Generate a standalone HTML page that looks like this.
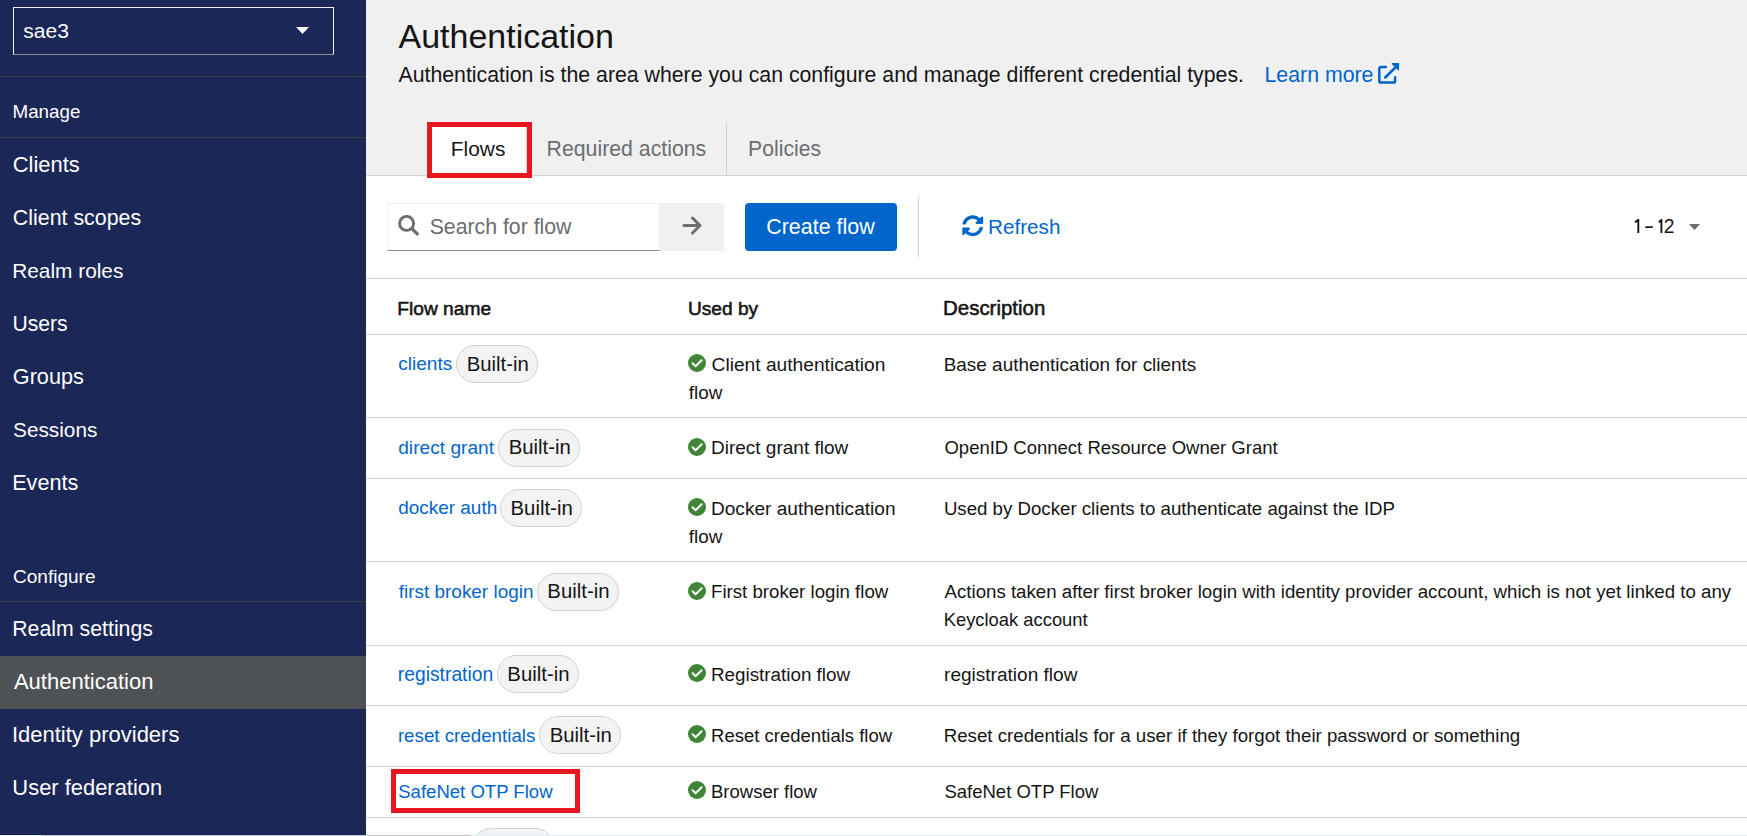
<!DOCTYPE html>
<html><head><meta charset="utf-8"><title>Authentication</title>
<style>
html,body{margin:0;padding:0;}
body{width:1747px;height:836px;overflow:hidden;position:relative;background:#fff;font-family:"Liberation Sans",sans-serif;color:#151515;}
.t{position:absolute;white-space:nowrap;}
.r{position:absolute;}
svg{position:absolute;display:block;}
.badge{position:absolute;height:38px;box-sizing:border-box;border:1px solid #d2d2d2;border-radius:19px;background:#f3f3f3;}
</style></head><body>

<div class="r" style="left:0px;top:0px;width:366px;height:836px;background:#1b2756;"></div>
<div class="r" style="left:13px;top:7px;width:319px;height:46px;border:1px solid #f0f0f0;border-bottom-color:#8a8d90;"></div>
<div class="t " style="left:23.27px;top:17px;font-size:21.048px;line-height:27px;color:#fff;">sae3</div>
<svg style="left:296px;top:27px" width="13" height="7" viewBox="0 0 13 7"><path d="M0 0H13L6.5 7Z" fill="#fff"/></svg>
<div class="r" style="left:0px;top:76px;width:366px;height:1px;background:#3c3f42;"></div>
<div class="t " style="left:12.50px;top:99px;font-size:18.797px;line-height:25px;color:#fff;">Manage</div>
<div class="r" style="left:0px;top:137px;width:366px;height:1px;background:#3c3f42;"></div>
<div class="t " style="left:12.80px;top:150px;font-size:21.919px;line-height:29px;color:#fff;">Clients</div>
<div class="t " style="left:12.83px;top:204px;font-size:21.385px;line-height:28px;color:#fff;">Client scopes</div>
<div class="t " style="left:12.23px;top:257px;font-size:20.843px;line-height:27px;color:#fff;">Realm roles</div>
<div class="t " style="left:12.42px;top:310px;font-size:21.155px;line-height:27px;color:#fff;">Users</div>
<div class="t " style="left:12.82px;top:362px;font-size:21.656px;line-height:29px;color:#fff;">Groups</div>
<div class="t " style="left:13.07px;top:416px;font-size:20.779px;line-height:27px;color:#fff;">Sessions</div>
<div class="t " style="left:12.17px;top:468px;font-size:21.667px;line-height:29px;color:#fff;">Events</div>
<div class="t " style="left:12.95px;top:564px;font-size:19.059px;line-height:25px;color:#fff;">Configure</div>
<div class="r" style="left:0px;top:601px;width:366px;height:1px;background:#3c3f42;"></div>
<div class="r" style="left:0px;top:656px;width:366px;height:53px;background:#4f5255;"></div>
<div class="t " style="left:12.20px;top:615px;font-size:21.292px;line-height:28px;color:#fff;">Realm settings</div>
<div class="t " style="left:13.90px;top:667px;font-size:22.038px;line-height:29px;color:#fff;">Authentication</div>
<div class="t " style="left:11.92px;top:720px;font-size:22.016px;line-height:29px;color:#fff;">Identity providers</div>
<div class="t " style="left:12.37px;top:773px;font-size:21.925px;line-height:29px;color:#fff;">User federation</div>
<div class="r" style="left:366px;top:0px;width:1381px;height:175px;background:#f0f0f0;"></div>
<div class="r" style="left:366px;top:175px;width:1381px;height:1px;background:#d2d2d2;"></div>
<div class="t " style="left:398.50px;top:15px;font-size:33.997px;line-height:42px;color:#151515;">Authentication</div>
<div class="t " style="left:398.50px;top:61px;font-size:21.297px;line-height:28px;color:#151515;">Authentication is the area where you can configure and manage different credential types.</div>
<div class="t " style="left:1264.49px;top:61px;font-size:21.323px;line-height:28px;color:#0066cc;">Learn more</div>
<svg style="left:1378px;top:63px;overflow:visible" width="22" height="22" viewBox="0 0 22 22"><path d="M7.9 4.1H3A1.7 1.7 0 0 0 1.3 5.8V17.9A1.7 1.7 0 0 0 3 19.6H15.4A1.7 1.7 0 0 0 17.1 17.9V14.2" fill="none" stroke="#0066cc" stroke-width="2.5" stroke-linecap="round"/><path d="M7.3 14.5L17.2 4.6" stroke="#0066cc" stroke-width="2.7" stroke-linecap="round"/><path d="M14.2 0.6H20.5V6.9Z" fill="#0066cc" stroke="#0066cc" stroke-width="1.2" stroke-linejoin="round"/></svg>
<div class="r" style="left:427px;top:122px;width:100px;height:54px;background:#fff;"></div>
<div class="r" style="left:526px;top:123px;width:1px;height:52px;background:#d2d2d2;"></div>
<div class="t " style="left:450.83px;top:135px;font-size:20.88px;line-height:27px;color:#151515;">Flows</div>
<div class="t " style="left:546.60px;top:135px;font-size:21.272px;line-height:28px;color:#6a6e73;">Required actions</div>
<div class="r" style="left:726px;top:123px;width:1px;height:52px;background:#d2d2d2;"></div>
<div class="t " style="left:748.11px;top:135px;font-size:21.171px;line-height:27px;color:#6a6e73;">Policies</div>
<div class="r" style="left:427px;top:122px;width:95px;height:46px;border:5px solid #e8161e;"></div>
<div class="r" style="left:387px;top:203px;width:271px;height:46px;background:#fff;border:1px solid #f0f0f0;border-bottom:1px solid #8a8d90;"></div>
<svg style="left:398px;top:215px" width="22" height="22" viewBox="0 0 22 22"><circle cx="8.6" cy="8.4" r="7.0" fill="none" stroke="#6a6e73" stroke-width="2.9"/><path d="M14 13.8L19.3 18.9" stroke="#6a6e73" stroke-width="3.3" stroke-linecap="round"/></svg>
<div class="t " style="left:429.65px;top:213px;font-size:21.282px;line-height:28px;color:#6a6e73;">Search for flow</div>
<div class="r" style="left:660px;top:203px;width:64px;height:48px;background:#f0f0f0;"></div>
<svg style="left:682px;top:216px" width="21" height="19" viewBox="0 0 21 19"><path d="M2 9.5H18M10.5 2L18 9.5L10.5 17" fill="none" stroke="#6a6e73" stroke-width="3" stroke-linecap="round" stroke-linejoin="round"/></svg>
<div class="r" style="left:745px;top:203px;width:152px;height:48px;background:#0066cc;border-radius:4px;"></div>
<div class="t " style="left:766.23px;top:213px;font-size:21.457px;line-height:28px;color:#fff;">Create flow</div>
<div class="r" style="left:918px;top:197px;width:1px;height:60px;background:#d2d2d2;"></div>
<svg style="left:962px;top:215px" width="21.5" height="21.5" viewBox="0 0 512 512"><path fill="#0066cc" d="M370.72 133.28C339.458 104.008 298.888 87.962 255.848 88c-77.458.068-144.328 53.178-162.791 126.85-1.344 5.363-6.122 9.15-11.651 9.15H24.103c-7.498 0-13.194-6.807-11.807-14.176C33.933 94.924 134.813 8 256 8c66.448 0 126.791 26.136 171.315 68.685L463.03 40.97C478.149 25.851 504 36.559 504 57.941V192c0 13.255-10.745 24-24 24H345.941c-21.382 0-32.09-25.851-16.971-40.971l41.75-41.749zM32 296h134.059c21.382 0 32.09 25.851 16.971 40.971l-41.75 41.75c31.262 29.273 71.835 45.319 114.876 45.28 77.418-.07 144.315-53.144 162.787-126.849 1.344-5.363 6.122-9.15 11.651-9.15h57.304c7.498 0 13.194 6.807 11.807 14.176C478.067 417.076 377.187 504 256 504c-66.448 0-126.791-26.136-171.315-68.685L48.97 471.03C33.851 486.149 8 475.441 8 454.059V320c0-13.255 10.745-24 24-24z"/></svg>
<div class="t " style="left:988.05px;top:213px;font-size:20.685px;line-height:27px;color:#0066cc;">Refresh</div>
<svg style="left:1630px;top:215px" width="40" height="22" viewBox="0 0 40 22"><path d="M5.0 7.2L8.3 4.9V17.9M28.8 7.2L31.4 4.9V17.9" fill="none" stroke="#151515" stroke-width="1.9" stroke-linejoin="round"/><path d="M15.3 12.1H22.8" stroke="#151515" stroke-width="1.7"/></svg>
<div class="t " style="left:1663.74px;top:214px;font-size:19.3px;line-height:25px;color:#151515;">2</div>
<svg style="left:1689px;top:224px" width="11" height="6" viewBox="0 0 11 6"><path d="M0 0H11L5.5 6Z" fill="#6a6e73"/></svg>
<div class="r" style="left:366px;top:278px;width:1381px;height:1px;background:#d2d2d2;"></div>
<div class="t " style="left:397.26px;top:296px;font-size:19.203px;line-height:25px;color:#151515;-webkit-text-stroke:0.55px #151515;">Flow name</div>
<div class="t " style="left:687.96px;top:296px;font-size:19.139px;line-height:25px;color:#151515;-webkit-text-stroke:0.55px #151515;">Used by</div>
<div class="t " style="left:943.06px;top:294px;font-size:20.453px;line-height:27px;color:#151515;-webkit-text-stroke:0.55px #151515;">Description</div>
<div class="r" style="left:366px;top:334px;width:1381px;height:1px;background:#d2d2d2;"></div>
<div class="r" style="left:366px;top:417px;width:1381px;height:1px;background:#d2d2d2;"></div>
<div class="r" style="left:366px;top:478px;width:1381px;height:1px;background:#d2d2d2;"></div>
<div class="r" style="left:366px;top:561px;width:1381px;height:1px;background:#d2d2d2;"></div>
<div class="r" style="left:366px;top:645px;width:1381px;height:1px;background:#d2d2d2;"></div>
<div class="r" style="left:366px;top:705px;width:1381px;height:1px;background:#d2d2d2;"></div>
<div class="r" style="left:366px;top:766px;width:1381px;height:1px;background:#d2d2d2;"></div>
<div class="r" style="left:366px;top:817px;width:1381px;height:1px;background:#d2d2d2;"></div>
<div class="t " style="left:398.24px;top:351px;font-size:19.058px;line-height:25px;color:#0066cc;">clients</div>
<div class="badge" style="left:456.30px;top:345.40px;width:82px;"></div>
<div class="t " style="left:466.67px;top:351px;font-size:20.344px;line-height:26px;color:#151515;">Built-in</div>
<svg style="left:688.3px;top:354.40px" width="18" height="18" viewBox="0 0 18 18"><circle cx="9" cy="9" r="9" fill="#3e8635"/><path d="M4.6 9.3L7.6 12.2L13.6 6.3" fill="none" stroke="#fff" stroke-width="2.0" stroke-linecap="round" stroke-linejoin="round"/></svg>
<div class="t " style="left:711.54px;top:352px;font-size:19.196px;line-height:25px;color:#151515;">Client authentication</div>
<div class="t " style="left:688.81px;top:380px;font-size:18.87px;line-height:25px;color:#151515;">flow</div>
<div class="t " style="left:943.68px;top:352px;font-size:18.942px;line-height:25px;color:#151515;">Base authentication for clients</div>
<div class="t " style="left:398.23px;top:435px;font-size:19.173px;line-height:25px;color:#0066cc;">direct grant</div>
<div class="badge" style="left:498.30px;top:429.00px;width:82px;"></div>
<div class="t " style="left:508.67px;top:434px;font-size:20.344px;line-height:26px;color:#151515;">Built-in</div>
<svg style="left:688.3px;top:438.00px" width="18" height="18" viewBox="0 0 18 18"><circle cx="9" cy="9" r="9" fill="#3e8635"/><path d="M4.6 9.3L7.6 12.2L13.6 6.3" fill="none" stroke="#fff" stroke-width="2.0" stroke-linecap="round" stroke-linejoin="round"/></svg>
<div class="t " style="left:710.98px;top:435px;font-size:19.007px;line-height:25px;color:#151515;">Direct grant flow</div>
<div class="t " style="left:944.46px;top:435px;font-size:18.519px;line-height:25px;color:#151515;">OpenID Connect Resource Owner Grant</div>
<div class="t " style="left:398.24px;top:495px;font-size:18.945px;line-height:25px;color:#0066cc;">docker auth</div>
<div class="badge" style="left:500.20px;top:489.40px;width:82px;"></div>
<div class="t " style="left:510.57px;top:495px;font-size:20.344px;line-height:26px;color:#151515;">Built-in</div>
<svg style="left:688.3px;top:498.40px" width="18" height="18" viewBox="0 0 18 18"><circle cx="9" cy="9" r="9" fill="#3e8635"/><path d="M4.6 9.3L7.6 12.2L13.6 6.3" fill="none" stroke="#fff" stroke-width="2.0" stroke-linecap="round" stroke-linejoin="round"/></svg>
<div class="t " style="left:710.97px;top:496px;font-size:19.087px;line-height:25px;color:#151515;">Docker authentication</div>
<div class="t " style="left:688.81px;top:524px;font-size:18.87px;line-height:25px;color:#151515;">flow</div>
<div class="t " style="left:943.89px;top:496px;font-size:18.674px;line-height:25px;color:#151515;">Used by Docker clients to authenticate against the IDP</div>
<div class="t " style="left:398.81px;top:579px;font-size:18.935px;line-height:25px;color:#0066cc;">first broker login</div>
<div class="badge" style="left:537.00px;top:572.60px;width:82px;"></div>
<div class="t " style="left:547.37px;top:578px;font-size:20.344px;line-height:26px;color:#151515;">Built-in</div>
<svg style="left:688.3px;top:581.60px" width="18" height="18" viewBox="0 0 18 18"><circle cx="9" cy="9" r="9" fill="#3e8635"/><path d="M4.6 9.3L7.6 12.2L13.6 6.3" fill="none" stroke="#fff" stroke-width="2.0" stroke-linecap="round" stroke-linejoin="round"/></svg>
<div class="t " style="left:711.01px;top:579px;font-size:18.674px;line-height:25px;color:#151515;">First broker login flow</div>
<div class="t " style="left:944.50px;top:579px;font-size:18.68px;line-height:25px;color:#151515;">Actions taken after first broker login with identity provider account, which is not yet linked to any</div>
<div class="t " style="left:943.73px;top:607px;font-size:18.374px;line-height:25px;color:#151515;">Keycloak account</div>
<div class="t " style="left:397.84px;top:662px;font-size:19.295px;line-height:25px;color:#0066cc;">registration</div>
<div class="badge" style="left:497.00px;top:655.40px;width:82px;"></div>
<div class="t " style="left:507.37px;top:661px;font-size:20.344px;line-height:26px;color:#151515;">Built-in</div>
<svg style="left:688.3px;top:664.40px" width="18" height="18" viewBox="0 0 18 18"><circle cx="9" cy="9" r="9" fill="#3e8635"/><path d="M4.6 9.3L7.6 12.2L13.6 6.3" fill="none" stroke="#fff" stroke-width="2.0" stroke-linecap="round" stroke-linejoin="round"/></svg>
<div class="t " style="left:710.99px;top:662px;font-size:18.825px;line-height:25px;color:#151515;">Registration flow</div>
<div class="t " style="left:944.06px;top:662px;font-size:19.05px;line-height:25px;color:#151515;">registration flow</div>
<div class="t " style="left:397.88px;top:723px;font-size:18.743px;line-height:25px;color:#0066cc;">reset credentials</div>
<div class="badge" style="left:539.30px;top:716.40px;width:82px;"></div>
<div class="t " style="left:549.67px;top:722px;font-size:20.344px;line-height:26px;color:#151515;">Built-in</div>
<svg style="left:688.3px;top:725.40px" width="18" height="18" viewBox="0 0 18 18"><circle cx="9" cy="9" r="9" fill="#3e8635"/><path d="M4.6 9.3L7.6 12.2L13.6 6.3" fill="none" stroke="#fff" stroke-width="2.0" stroke-linecap="round" stroke-linejoin="round"/></svg>
<div class="t " style="left:711.02px;top:723px;font-size:18.527px;line-height:25px;color:#151515;">Reset credentials flow</div>
<div class="t " style="left:943.70px;top:723px;font-size:18.701px;line-height:25px;color:#151515;">Reset credentials for a user if they forgot their password or something</div>
<div class="t " style="left:398.26px;top:779px;font-size:18.563px;line-height:25px;color:#0066cc;">SafeNet OTP Flow</div>
<svg style="left:688.3px;top:781.00px" width="18" height="18" viewBox="0 0 18 18"><circle cx="9" cy="9" r="9" fill="#3e8635"/><path d="M4.6 9.3L7.6 12.2L13.6 6.3" fill="none" stroke="#fff" stroke-width="2.0" stroke-linecap="round" stroke-linejoin="round"/></svg>
<div class="t " style="left:711.02px;top:779px;font-size:18.531px;line-height:25px;color:#151515;">Browser flow</div>
<div class="t " style="left:944.46px;top:779px;font-size:18.502px;line-height:25px;color:#151515;">SafeNet OTP Flow</div>
<div class="r" style="left:391px;top:769px;width:179px;height:34px;border:5px solid #e8161e;"></div>
<div class="badge" style="left:471.7px;top:828px;width:82px;"></div>
<div class="r" style="left:0px;top:835px;width:41px;height:1px;background:#e4f0f0;"></div>
<div class="r" style="left:41px;top:835px;width:430px;height:1px;background:#c4c4c4;"></div>
<div class="r" style="left:471px;top:835px;width:1276px;height:1px;background:#dff0f0;"></div>
</body></html>
